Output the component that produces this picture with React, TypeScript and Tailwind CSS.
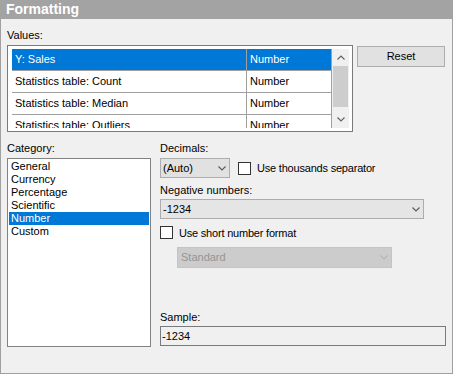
import React from "react";

const rows = [
  { name: "Y: Sales", format: "Number" },
  { name: "Statistics table: Count", format: "Number" },
  { name: "Statistics table: Median", format: "Number" },
  { name: "Statistics table: Outliers", format: "Number" },
];

const categories = ["General", "Currency", "Percentage", "Scientific", "Number", "Custom"];

function Chevron({ color = "#5a5a5a", up = false }: { color?: string; up?: boolean }) {
  return (
    <svg width="8" height="5" viewBox="0 0 8 5" className="shrink-0">
      <polyline
        points={up ? "0.5,4.5 4,1 7.5,4.5" : "0.5,0.5 4,4 7.5,0.5"}
        fill="none"
        stroke={color}
        strokeWidth="1.1"
      />
    </svg>
  );
}

function Checkbox({ label }: { label: string }) {
  return (
    <div className="flex items-center h-[13px]">
      <div className="w-[13px] h-[13px] border border-[#333333] bg-white" />
      <span className="ml-[6px] leading-[14px] tracking-[-0.2px]">{label}</span>
    </div>
  );
}

export default function App() {
  return (
    <div className="w-[453px] h-[374px] bg-[#f0f0f0] font-['Liberation_Sans',Arial,sans-serif] text-[11px] text-black">
      <div className="h-[19px] bg-[#a3a3a3] pl-[6px] text-[14px] leading-[19px] font-bold text-white">
        Formatting
      </div>
      <div className="h-[355px] border-x border-b border-[#a0a0a0] pl-[6px] pt-[9px]">
        <div className="h-[14px] leading-[14px]">Values:</div>
        <div className="mt-[3px] flex items-start gap-[4px]">
          {/* values grid */}
          <div className="w-[346px] h-[87px] border border-[#7a7a7a] bg-white pl-[4px] pr-[3px] py-[3px] flex">
            <div className="w-[320px] h-[79px] overflow-hidden">
              {rows.map((r, i) => (
                <div
                  key={r.name}
                  className={
                    "flex h-[22px] border-b border-[#a0a0a0] " +
                    (i === 0 ? "bg-[#0078d7] text-white" : "")
                  }
                >
                  <div className="w-[235px] border-r border-[#a0a0a0] pl-[3px] flex items-center">
                    {r.name}
                  </div>
                  <div className="w-[85px] border-r border-[#a0a0a0] pl-[3px] flex items-center">
                    {r.format}
                  </div>
                </div>
              ))}
            </div>
            <div className="w-[17px] h-[79px] bg-[#f0f0f0] flex flex-col">
              <div className="h-[17px] flex items-center justify-center">
                <Chevron up color="#606060" />
              </div>
              <div className="h-[41px] mx-[1px] bg-[#cdcdcd]" />
              <div className="flex-1" />
              <div className="h-[17px] flex items-center justify-center">
                <Chevron color="#606060" />
              </div>
            </div>
          </div>
          <button className="mt-[1px] w-[88px] h-[21px] border border-[#adadad] bg-[#e1e1e1] text-[11px] leading-[19px]">
            Reset
          </button>
        </div>

        <div className="mt-[9px] flex">
          {/* category list */}
          <div className="w-[144px]">
            <div className="h-[14px] leading-[14px]">Category:</div>
            <div className="mt-[3px] h-[189px] border border-[#828282] bg-white p-[1px]">
              {categories.map((c) => (
                <div
                  key={c}
                  className={
                    "h-[13px] leading-[13px] pl-[2px] " +
                    (c === "Number" ? "bg-[#0078d7] text-white" : "")
                  }
                >
                  {c}
                </div>
              ))}
            </div>
          </div>

          {/* format options */}
          <div className="ml-[9px] flex flex-col">
            <div className="h-[14px] leading-[15px]">Decimals:</div>
            <div className="mt-[3px] flex items-center">
              <div className="w-[70px] h-[20px] border border-[#adadad] bg-[#e1e1e1] pl-[2px] pr-[3px] flex items-center justify-between">
                <span>(Auto)</span>
                <Chevron />
              </div>
              <div className="ml-[8px]">
                <Checkbox label="Use thousands separator" />
              </div>
            </div>
            <div className="mt-[5px] h-[14px] leading-[15px]">Negative numbers:</div>
            <div className="mt-[2px] w-[264px] h-[20px] border border-[#adadad] bg-[#e5e5e5] pl-[2px] pr-[3px] flex items-center justify-between">
              <span>-1234</span>
              <Chevron />
            </div>
            <div className="mt-[7px]">
              <Checkbox label="Use short number format" />
            </div>
            <div className="mt-[8px] ml-[17px] w-[215px] h-[21px] border border-[#c4c4c4] bg-[#cccccc] pl-[3px] pr-[3px] flex items-center justify-between text-[#959595]">
              <span>Standard</span>
              <Chevron color="#b4b4b4" />
            </div>
            <div className="mt-[42px] h-[14px] leading-[15px]">Sample:</div>
            <div className="mt-[2px] w-[286px] h-[20px] border border-[#7a7a7a] bg-[#f0f0f0] pl-[1px] flex items-center">
              -1234
            </div>
          </div>
        </div>
      </div>
    </div>
  );
}
